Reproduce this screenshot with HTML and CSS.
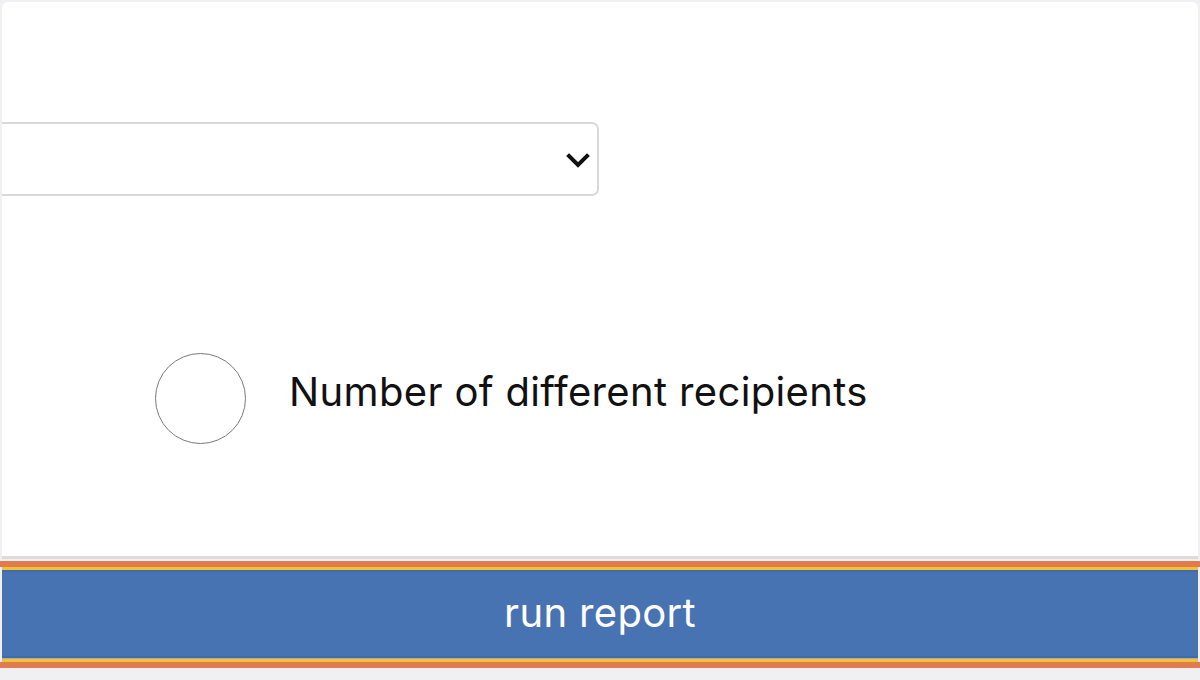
FILE: index.html
```html
<!DOCTYPE html>
<html lang="en">
<head>
<meta charset="utf-8">
<title>Report</title>
<link rel="stylesheet" href="styles.css">
</head>
<body>
  <main class="card">
    <div class="select-box">
      <svg class="chevron" viewBox="0 0 24 16" width="24" height="16" aria-hidden="true">
        <path d="M3 3 L12 12 L21 3" fill="none" stroke="#111" stroke-width="4" stroke-linecap="square" stroke-linejoin="miter"/>
      </svg>
    </div>
    <label class="option">
      <span class="radio"></span>
      <span class="option-text">Number of different recipients</span>
    </label>
  </main>
  <div class="run-wrap">
    <button class="run-btn" type="button">run report</button>
  </div>
</body>
</html>
```

FILE: styles.css
```css
html, body {
  margin: 0;
  padding: 0;
}

body {
  background: #f0f0f3;
  width: 1200px;
  height: 680px;
  overflow: hidden;
  font-family: Inter, "Noto Sans", sans-serif;
  color: #1a1a1a;
}

.card {
  margin: 2px 2px 0;
  background: #ffffff;
  border-radius: 6px 6px 0 0;
  border-bottom: 3px solid #dcdcdc;
  overflow: hidden;
  padding-top: 120px;
  box-sizing: border-box;
  height: 557px;
}

.select-box {
  margin-left: -30px;
  width: 627px;
  height: 74px;
  box-sizing: border-box;
  border: 2px solid #d9d9d9;
  border-radius: 7px;
  display: flex;
  align-items: center;
  justify-content: flex-end;
  padding-right: 7px;
}

.chevron {
  display: block;
  margin-top: 4px;
}

.option {
  display: flex;
  align-items: center;
  margin-top: 157px;
  padding-left: 153px;
}

.radio {
  width: 91px;
  height: 91px;
  box-sizing: border-box;
  border: 1.5px solid #7a7a7a;
  border-radius: 50%;
  flex: none;
}

.option-text {
  margin-left: 43px;
  font-size: 40px;
  font-weight: 400;
  letter-spacing: 0.35px;
  margin-top: -15px;
  color: #111;
}

.run-wrap {
  margin-top: 2px;
  border-top: 6px solid #e07b50;
  border-bottom: 6px solid #e07b50;
}

.run-btn {
  display: block;
  margin: 0 2px;
  width: 1196px;
  height: 95px;
  box-sizing: border-box;
  border: 0;
  border-top: 3px solid #f4c22a;
  border-bottom: 3px solid #f4c22a;
  background: #4873b3;
  box-shadow: inset 0 2px 0 #3d6bb8, inset 0 -1px 0 #a9adb8, inset 0 -3px 0 #3e6ab0;
  color: #ffffff;
  font-family: Inter, "Noto Sans", sans-serif;
  font-size: 40px;
  letter-spacing: 0.35px;
  padding: 0 0 4px;
  cursor: pointer;
}
```
